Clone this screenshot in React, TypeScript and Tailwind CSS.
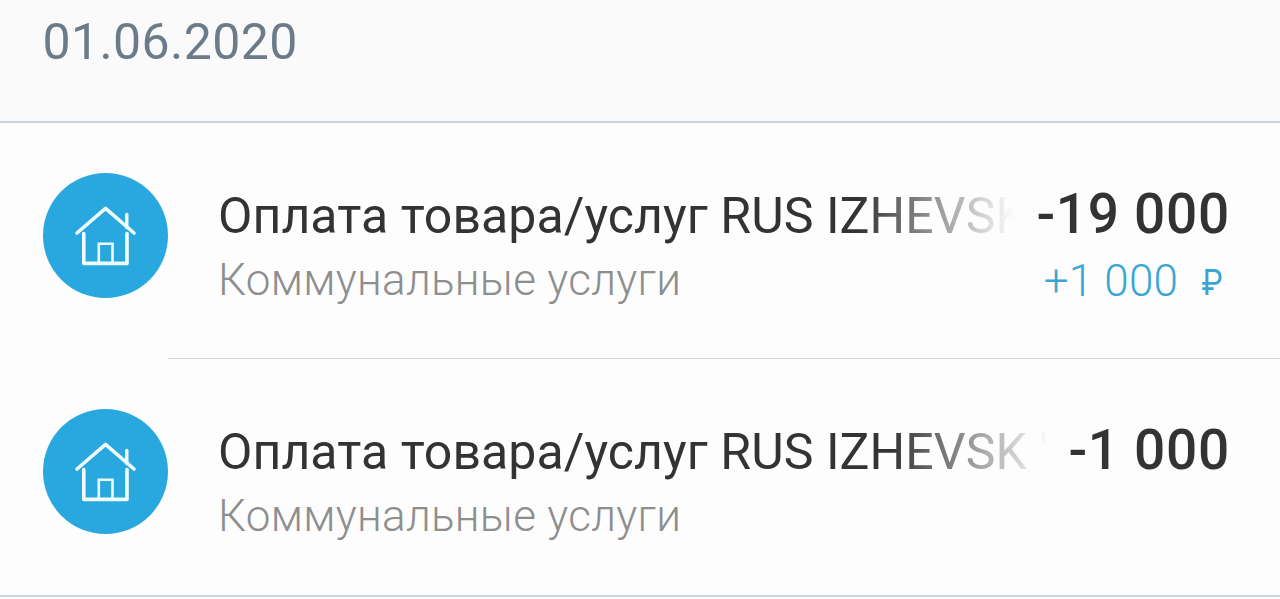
const operations = [
  {
    id: 1,
    title: 'Оплата товара/услуг RUS IZHEVSK',
    category: 'Коммунальные услуги',
    amount: '-19 000',
    bonus: '+1 000',
  },
  {
    id: 2,
    title: "Оплата товара/услуг RUS IZHEVSK '",
    category: 'Коммунальные услуги',
    amount: '-1 000',
    bonus: null,
  },
];

function HouseIcon() {
  return (
    <svg
      viewBox="0 0 125 125"
      className="size-[125px] shrink-0 rounded-full bg-[#29a8e0]"
      fill="none"
      stroke="#effdff"
      strokeLinecap="round"
      strokeLinejoin="round"
    >
      <path d="M34 60 62.5 35.3 91 60" strokeWidth="3.6" />
      <path d="M83.8 41.5v13" strokeWidth="3.4" />
      <path d="M40.8 60.5V90.4H84V60.5" strokeWidth="3.6" />
      <path d="M55.8 90V70.7H69.5V90" strokeWidth="2.6" strokeLinejoin="miter" />
    </svg>
  );
}

export default function App() {
  return (
    <main className="h-[599px] overflow-hidden bg-[#fdfdfd] font-['Roboto',sans-serif]">
      <header className="h-[123px] border-b-2 border-[#c9d3da] bg-[#fafafa] pt-3 pl-[42.5px]">
        <h1 className="text-[50px] leading-[60px] tracking-[0.4px] text-[#6c7b89]">01.06.2020</h1>
      </header>

      <ul className="border-b-2 border-[#c9d3da]">
        {operations.map((item, index) => (
          <li key={item.id} className="flex h-[236px] pl-[43px]">
            <div className="pt-[50px]">
              <HouseIcon />
            </div>

            <div
              className={
                index === 0
                  ? 'flex min-w-0 flex-1 border-b border-[#ccd8dc] pr-[50px] pl-[50px]'
                  : 'flex min-w-0 flex-1 pr-[50px] pl-[50px]'
              }
            >
              <div className="min-w-0 flex-1 pt-[63px]">
                <p
                  className={
                    index === 0
                      ? 'w-[804px] mask-r-from-[641px] mask-r-to-[796px] text-[50px] leading-[60px] tracking-[0.07px] whitespace-nowrap text-[#333333]'
                      : 'w-[832px] mask-r-from-[673px] mask-r-to-[832px] text-[50px] leading-[60px] tracking-[0.07px] whitespace-nowrap text-[#333333]'
                  }
                >
                  {item.title}
                </p>
                <p className="mt-1 text-[44px] leading-[60px] font-light tracking-[0.3px] text-[#8e8e8e]">
                  {item.category}
                </p>
              </div>

              <div className="shrink-0 pt-[61px] text-right whitespace-nowrap">
                <p className="text-[55px] leading-[60px] font-medium tracking-[0.7px] text-[#333333]">
                  {item.amount}
                </p>
                {item.bonus && (
                  <p className="mt-[7px] pr-[7px] text-[44px] leading-[60px] font-light tracking-[0.2px] text-[#3aa5d3]">
                    {item.bonus}
                    <span className="relative -top-px ml-[21px] inline-block origin-right scale-x-88 text-[36px] leading-none font-normal tracking-normal">
                      ₽
                    </span>
                  </p>
                )}
              </div>
            </div>
          </li>
        ))}
      </ul>
    </main>
  );
}
